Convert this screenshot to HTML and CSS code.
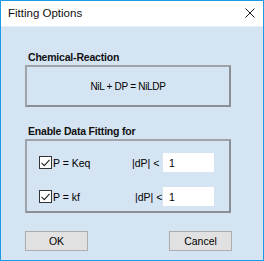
FILE: index.html
```html
<!doctype html>
<html lang="en">

<head>
  <meta charset="UTF-8">
  <title>Fitting Options</title>
  <link rel="stylesheet" href="styles.css">
</head>

<body>
  <div class="window">
    <div class="titlebar">
      <span class="titlebar__title">Fitting Options</span>
      <svg class="titlebar__close" width="10" height="10" viewBox="0 0 10 10" fill="none"
        xmlns="http://www.w3.org/2000/svg">
        <path d="M0.5 0.5L9.5 9.5M9.5 0.5L0.5 9.5" stroke="#1a1a1a" stroke-width="1" />
      </svg>
    </div>
    <div class="content">
      <section class="group">
        <h2 class="group__label">Chemical-Reaction</h2>
        <div class="group__box group__box--reaction">NiL + DP = NiLDP</div>
      </section>
      <section class="group group--fit">
        <h2 class="group__label">Enable Data Fitting for</h2>
        <div class="group__box group__box--fit">
          <div class="fit-row">
            <label class="check">
              <span class="check__box">
                <svg width="9" height="8" viewBox="0 0 9 8" fill="none" xmlns="http://www.w3.org/2000/svg">
                  <path d="M0.5 3.8L3.3 6.6L8.5 0.8" stroke="#222" stroke-width="1.1" />
                </svg>
              </span>
              <span class="check__text">P = Keq</span>
            </label>
            <span class="fit-row__tol">|dP| &lt;</span>
            <input class="fit-row__input" type="text" value="1">
          </div>
          <div class="fit-row">
            <label class="check">
              <span class="check__box">
                <svg width="9" height="8" viewBox="0 0 9 8" fill="none" xmlns="http://www.w3.org/2000/svg">
                  <path d="M0.5 3.8L3.3 6.6L8.5 0.8" stroke="#222" stroke-width="1.1" />
                </svg>
              </span>
              <span class="check__text">P = kf</span>
            </label>
            <span class="fit-row__tol fit-row__tol--shift">|dP| &lt;</span>
            <input class="fit-row__input" type="text" value="1">
          </div>
        </div>
      </section>
      <div class="actions">
        <button class="actions__button" type="button">OK</button>
        <button class="actions__button" type="button">Cancel</button>
      </div>
    </div>
  </div>
</body>

</html>
```

FILE: styles.css
```css
:root {
  --ui-font: 'Liberation Sans', arial, sans-serif;
  --dialog-bg: #d5e4f2;
  --frame-color: #1c9be6;
}

*,
*::before,
*::after {
  box-sizing: border-box;
}

body,
h2 {
  margin: 0;
}

body {
  font-family: var(--ui-font);
  color: #000;
}

.window {
  display: flex;
  flex-direction: column;
  width: 264px;
  height: 261px;
  border: 1px solid var(--frame-color);
  background-color: var(--dialog-bg);
}

.titlebar {
  display: flex;
  align-items: center;
  justify-content: space-between;
  height: 26px;
  padding: 0 8px 1px 7px;
  background-color: #fff;
  border-bottom: 1px solid #e6eef6;
}

.titlebar__title {
  font-size: 11.5px;
  color: #111;
}

.titlebar__close {
  display: block;
}

.content {
  padding: 24px 0 0 24px;
}

.group__label {
  height: 13px;
  margin-bottom: 1px;
  padding-left: 3px;
  font-size: 10.5px;
  font-weight: bold;
  line-height: 13px;
  letter-spacing: -0.2px;
  color: #101010;
}

.group__box {
  width: 206px;
  border: 2px solid #8b8e92;
  border-left-color: #9fa3a7;
  border-top-color: #9fa3a7;
}

.group__box--reaction {
  display: flex;
  align-items: center;
  justify-content: center;
  height: 42px;
  font-size: 10px;
  letter-spacing: -0.3px;
}

.group--fit {
  margin-top: 18px;
}

.group__box--fit {
  display: flex;
  flex-direction: column;
  gap: 15px;
  height: 74px;
  padding: 12px 0 0 12px;
}

.fit-row {
  display: grid;
  grid-template-columns: 93px 31px 51px;
  align-items: center;
  height: 19px;
  font-size: 10.5px;
}

.check {
  display: flex;
  align-items: center;
  gap: 1px;
}

.check__box {
  display: flex;
  align-items: center;
  justify-content: center;
  width: 13px;
  height: 13px;
  border: 1px solid #333;
  background-color: #fff;
}

.fit-row__tol--shift {
  padding-left: 3px;
}

.fit-row__input {
  width: 51px;
  height: 19px;
  padding: 0 0 0 6px;
  border: none;
  background-color: #fff;
  font-family: var(--ui-font);
  font-size: 10.5px;
  color: #000;
}

.actions {
  display: flex;
  justify-content: space-between;
  width: 207px;
  margin-top: 18px;
}

.actions__button {
  width: 63px;
  height: 20px;
  padding: 0;
  border: 1px solid #adadad;
  background-color: #e1e1e1;
  font-family: var(--ui-font);
  font-size: 10.5px;
  color: #000;
}
```
